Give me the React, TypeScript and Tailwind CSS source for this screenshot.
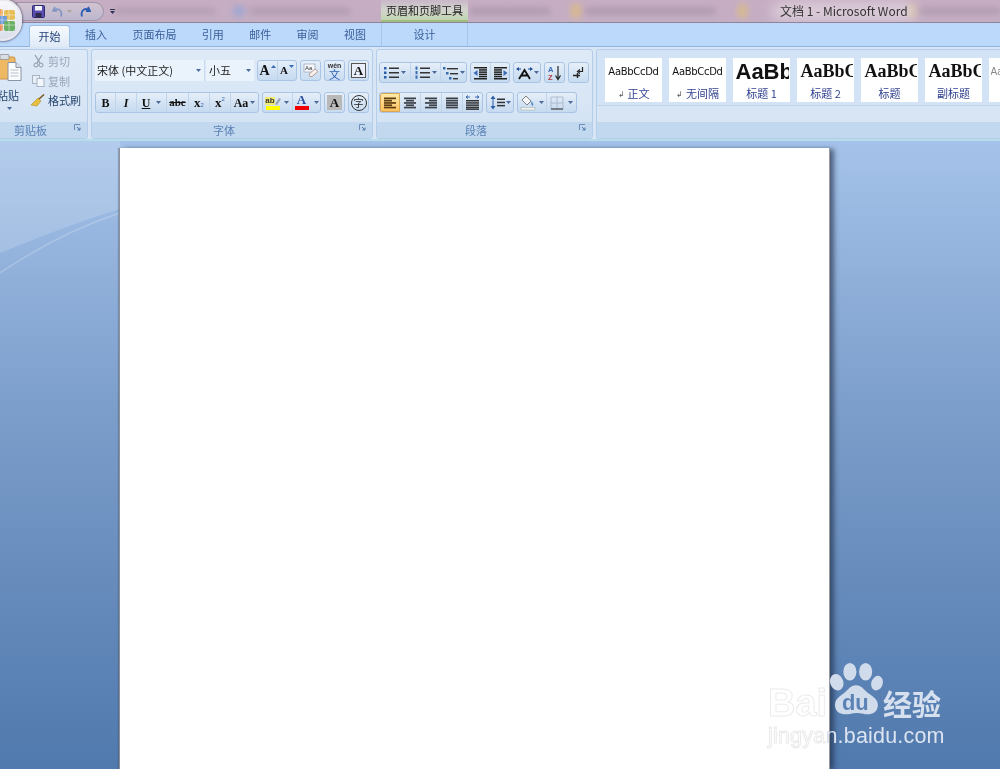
import React from "react";

const cjk = "font-['Noto_Sans_CJK_SC','Noto_Sans',sans-serif]";

function Arrow({ c = "#4a6a9a" }: { c?: string }) {
  return (
    <svg width="5" height="3" viewBox="0 0 5 3" className="shrink-0">
      <path d="M0 0h5L2.5 3z" fill={c} />
    </svg>
  );
}

function Grp({ w, children, className = "" }: { w: number; children: React.ReactNode; className?: string }) {
  return (
    <div
      style={{ width: w }}
      className={`h-[21px] flex items-center rounded-[3px] border border-[#a9c5e6] bg-gradient-to-b from-[#e6eff9] via-[#d4e3f4] to-[#c6daf0] overflow-hidden shrink-0 ${className}`}
    >
      {children}
    </div>
  );
}

function Cell({ w, children, className = "", sep = true }: { w: number; children?: React.ReactNode; className?: string; sep?: boolean }) {
  return (
    <div
      style={{ width: w }}
      className={`h-full flex items-center justify-center gap-[2px] shrink-0 ${sep ? "border-r border-[#c0d4ea]" : ""} ${className}`}
    >
      {children}
    </div>
  );
}

function Lines({ kind }: { kind: "left" | "center" | "right" | "just" }) {
  const rows = [0, 1, 2, 3, 4];
  const pos = (i: number) => {
    const short = i % 2 === 1;
    if (kind === "just") return [1, 13];
    if (kind === "left") return short ? [1, 9] : [1, 13];
    if (kind === "right") return short ? [5, 13] : [1, 13];
    return short ? [3, 11] : [1, 13];
  };
  const dark = kind === "left" ? "#5c3d10" : "#3c4048";
  return (
    <svg width="14" height="12" viewBox="0 0 14 12">
      {rows.map((i) => {
        const [a, b] = pos(i);
        return <rect key={i} x={a} y={0.5 + i * 2.3} width={b - a} height="1.7" fill={dark} />;
      })}
    </svg>
  );
}

function BulletIcon() {
  return (
    <svg width="15" height="13" viewBox="0 0 15 13">
      {[1, 5.5, 10].map((y) => (
        <g key={y}>
          <rect x="0" y={y} width="2.5" height="2.5" fill="#2a5ea8" />
          <rect x="5" y={y + 0.5} width="10" height="1.5" fill="#333" />
        </g>
      ))}
    </svg>
  );
}

function NumberIcon() {
  return (
    <svg width="15" height="13" viewBox="0 0 15 13">
      {[1, 5.5, 10].map((y) => (
        <g key={y}>
          <rect x="0.5" y={y - 0.5} width="2" height="3.2" fill="#3a6cb4" />
          <rect x="5" y={y + 0.5} width="10" height="1.5" fill="#333" />
        </g>
      ))}
    </svg>
  );
}

function MultiIcon() {
  return (
    <svg width="16" height="14" viewBox="0 0 16 14">
      <rect x="0" y="1" width="2.5" height="2.5" fill="#3a6cb4" />
      <rect x="4" y="2" width="11" height="1.4" fill="#333" />
      <rect x="3" y="6" width="2.5" height="2.5" fill="#3a6cb4" />
      <rect x="7" y="7" width="8" height="1.4" fill="#333" />
      <rect x="6" y="11" width="2.5" height="2.5" fill="#3a6cb4" />
      <rect x="10" y="12" width="5" height="1.4" fill="#333" />
    </svg>
  );
}

function IndentIcon({ flip }: { flip?: boolean }) {
  return (
    <svg width="15" height="14" viewBox="0 0 15 14" style={flip ? { transform: "scaleX(-1)" } : undefined}>
      {[1, 3.2, 5.4, 7.6, 9.8, 12].map((y, i) => (
        <rect key={y} x={i === 0 || i === 5 ? 1 : 6} y={y} width={i === 0 || i === 5 ? 13 : 8} height="1.5" fill="#222" />
      ))}
      <path d="M0.5 7l4-3v6z" fill="#3a6cb4" />
    </svg>
  );
}

function LetterBtn({ children, className = "" }: { children: React.ReactNode; className?: string }) {
  return (
    <div className={`h-[21px] w-[21px] flex items-center justify-center rounded-[3px] border border-[#a9c5e6] bg-gradient-to-b from-[#e6eff9] to-[#c8dcf1] shrink-0 ${className}`}>
      {children}
    </div>
  );
}

const serifB = "font-['Liberation_Serif',serif] font-bold text-[#111]";

function FontGroup() {
  return (
    <Group w={282} label="字体" labelClass="pl-[121px]">
      <div className="flex flex-col gap-[11px] pl-[3px] pt-[10px]">
        <div className="flex items-center h-[21px]">
          <div className={`w-[110px] h-[21px] bg-[#eaf2fb] border-r border-[#c6d9ee] flex items-center justify-between pl-[2px] pr-[3px] text-[11px] text-[#222] ${cjk}`}>
            <span>宋体 (中文正文)</span>
            <Arrow />
          </div>
          <div className={`ml-[1px] w-[48px] h-[21px] bg-[#eaf2fb] flex items-center justify-between pl-[3px] pr-[3px] text-[11px] text-[#222] ${cjk}`}>
            <span>小五</span>
            <Arrow />
          </div>
          <Grp w={40} className="ml-[3px]">
            <Cell w={20}>
              <span className={`${serifB} text-[14px] leading-none`}>A</span>
              <svg width="5" height="3" viewBox="0 0 5 3" className="-mt-2 -ml-[1px]"><path d="M0 3h5L2.5 0z" fill="#3a6cb4" /></svg>
            </Cell>
            <Cell w={18} sep={false}>
              <span className={`${serifB} text-[11px] leading-none`}>A</span>
              <svg width="5" height="3" viewBox="0 0 5 3" className="-mt-2 -ml-[1px]"><path d="M0 0h5L2.5 3z" fill="#3a6cb4" /></svg>
            </Cell>
          </Grp>
          <LetterBtn className="ml-[3px]">
            <svg width="17" height="15" viewBox="0 0 17 15">
              <rect x="2" y="1" width="11" height="8" fill="#f5f7fa" stroke="#8a94a8" strokeWidth="0.6" />
              <text x="3" y="7" fontSize="6" fontFamily="Liberation Sans" fill="#333">Aa</text>
              <path d="M7 11l6-5 3 2.5-6 5H8z" fill="#f6f0ee" stroke="#a98a80" strokeWidth="0.8" />
            </svg>
          </LetterBtn>
          <LetterBtn className="ml-[3px]">
            <div className="flex flex-col items-center leading-none">
              <span className="font-['Liberation_Sans',sans-serif] font-bold text-[7px] text-[#333]">wén</span>
              <span className={`${cjk} text-[11px] leading-[10px] text-[#2f5fb4]`}>文</span>
            </div>
          </LetterBtn>
          <LetterBtn className="ml-[3px]">
            <div className={`w-[15px] h-[15px] border border-[#555] flex items-center justify-center ${serifB} text-[13px] leading-none bg-[#e8eff8]`}>A</div>
          </LetterBtn>
        </div>
        <div className="flex items-center h-[21px]">
          <Grp w={164}>
            <Cell w={20}><span className={`${serifB} text-[12px]`}>B</span></Cell>
            <Cell w={21}><span className={`${serifB} italic text-[12px]`}>I</span></Cell>
            <Cell w={30} className="!gap-[6px]">
              <span className={`${serifB} underline text-[12px]`}>U</span>
              <Arrow />
            </Cell>
            <Cell w={22}><span className={`${serifB} line-through text-[11px]`}>abc</span></Cell>
            <Cell w={21}>
              <span className={`${serifB} text-[13px]`}>x</span>
              <span className="text-[6px] text-[#3a6cb4] font-['Liberation_Sans',sans-serif] mt-[6px] -ml-[2px]">2</span>
            </Cell>
            <Cell w={21}>
              <span className={`${serifB} text-[13px]`}>x</span>
              <span className="text-[6px] text-[#3a6cb4] font-['Liberation_Sans',sans-serif] -mt-[6px] -ml-[2px]">2</span>
            </Cell>
            <Cell w={27} sep={false}>
              <span className={`${serifB} text-[12px]`}>Aa</span>
              <Arrow />
            </Cell>
          </Grp>
          <Grp w={59} className="ml-[3px]">
            <Cell w={30} className="!gap-[4px]">
              <div className="flex flex-col items-center w-[14px]">
                <div className="flex items-end h-[9px]">
                  <span className="bg-[#f2ea70] text-[8px] leading-[8px] font-['Liberation_Sans',sans-serif] font-bold text-[#333]">ab</span>
                  <svg width="6" height="8" viewBox="0 0 6 8"><path d="M0 7l4-6 2 1-4 6z" fill="#9aa5b5" /></svg>
                </div>
                <div className="w-[14px] h-[4px] bg-[#ffff00] mt-[1px]" />
              </div>
              <Arrow />
            </Cell>
            <Cell w={27} sep={false} className="!gap-[5px]">
              <div className="flex flex-col items-center w-[14px]">
                <span className="font-['Liberation_Serif',serif] font-bold text-[13px] leading-[10px] text-[#2a4f9a]">A</span>
                <div className="w-[14px] h-[4px] bg-[#f00000] mt-[1px]" />
              </div>
              <Arrow />
            </Cell>
          </Grp>
          <LetterBtn className="ml-[3px]">
            <div className={`w-[15px] h-[15px] bg-[#b9b9b9] flex items-center justify-center ${serifB} text-[13px] leading-none`}>A</div>
          </LetterBtn>
          <LetterBtn className="ml-[3px]">
            <div className={`w-[16px] h-[16px] rounded-full border border-[#333] flex items-center justify-center ${cjk} text-[10px] leading-none text-[#222]`}>字</div>
          </LetterBtn>
        </div>
      </div>
    </Group>
  );
}

function Launcher() {
  return (
    <svg width="8" height="8" viewBox="0 0 8 8" className="absolute right-[5px] top-[2px]">
      <path d="M0.5 6V0.5H6" stroke="#6d8db8" fill="none" />
      <path d="M3 3l3 3M6 3.5V6H3.5" stroke="#4f76a8" fill="none" />
    </svg>
  );
}

function Group({ w, label, labelClass = "", children }: { w: number; label: string; labelClass?: string; children: React.ReactNode }) {
  return (
    <div style={{ width: w }} className="h-[90px] shrink-0 rounded-[3px] border border-[#b4cde8] bg-gradient-to-b from-[#dfeaf7] to-[#d2e2f4] flex flex-col overflow-hidden">
      <div className="h-[72px] shrink-0">{children}</div>
      <div className={`relative flex-1 bg-[#c2d8ef] flex items-center text-[11px] text-[#5a80b5] ${cjk} ${labelClass}`}>
        {label}
        <Launcher />
      </div>
    </div>
  );
}

function Clipboard() {
  return (
    <div className="w-[89px] h-[90px] -ml-[1px] shrink-0 rounded-r-[3px] border border-l-0 border-[#b4cde8] bg-gradient-to-b from-[#dfeaf7] to-[#d2e2f4] flex flex-col overflow-hidden">
      <div className="h-[72px] shrink-0 flex">
        <div className="w-[28px] shrink-0 flex flex-col items-start">
          <svg width="24" height="28" viewBox="0 0 24 28" className="mt-[4px]">
            <rect x="-4" y="3" width="20" height="22" rx="2" fill="#efb862" stroke="#c99344" />
            <rect x="1" y="0.5" width="9" height="5" rx="1" fill="#d8dde6" stroke="#888" strokeWidth="0.7" />
            <path d="M9 8.5h8l5 5v13H9z" fill="#fbfcfe" stroke="#8a94a3" />
            <path d="M17 8.5v5h5" fill="#dfe5ee" stroke="#8a94a3" />
            <path d="M11.5 16h8M11.5 19h8M11.5 22h8" stroke="#b8c0cc" />
          </svg>
          <span className={`${cjk} text-[11px] leading-[14px] text-[#27466f] mt-[6px] -ml-[2px]`}>粘贴</span>
          <div className="ml-[8px] mt-[5px]"><Arrow /></div>
        </div>
        <div className={`flex flex-col ${cjk} text-[11px] leading-[14px] pt-[3px]`}>
          <div className="flex items-center h-[14px] mt-[1px] gap-[4px] text-[#9aa7b8] pl-[6px]">
            <svg width="11" height="13" viewBox="0 0 11 13"><path d="M2 0l5 8M9 0L4 8" stroke="#8d97a6" strokeWidth="1.1" fill="none" /><circle cx="3" cy="10" r="2" fill="none" stroke="#8d97a6" /><circle cx="8" cy="10" r="2" fill="none" stroke="#8d97a6" /></svg>
            剪切
          </div>
          <div className="flex items-center h-[14px] mt-[6px] gap-[3px] text-[#9aa7b8] pl-[5px]">
            <svg width="13" height="12" viewBox="0 0 13 12"><rect x="0.5" y="0.5" width="7" height="8" fill="#e8eef6" stroke="#a8b4c4" /><rect x="5" y="3.5" width="7" height="8" fill="#f3f6fa" stroke="#a8b4c4" /></svg>
            复制
          </div>
          <div className="flex items-center h-[14px] mt-[5px] gap-[3px] text-[#27466f] pl-[4px]">
            <svg width="14" height="13" viewBox="0 0 14 13"><path d="M13 0.5L7 6" stroke="#7a5a26" strokeWidth="1.6" /><path d="M7 4l3 3-4 5-6-1z" fill="#e8c040" stroke="#a57f1c" strokeWidth="0.5" /></svg>
            格式刷
          </div>
        </div>
      </div>
      <div className={`relative flex-1 bg-[#c2d8ef] flex items-center pl-[15px] text-[11px] text-[#5a80b5] ${cjk}`}>
        剪贴板
        <Launcher />
      </div>
    </div>
  );
}

function Paragraph() {
  return (
    <Group w={217} label="段落" labelClass="pl-[88px]">
      <div className="flex flex-col gap-[9px] pl-[2px] pt-[12px]">
        <div className="flex items-center">
          <Grp w={88}>
            <Cell w={31}><BulletIcon /><Arrow /></Cell>
            <Cell w={30}><NumberIcon /><Arrow /></Cell>
            <Cell w={25} sep={false} className="!gap-[1px]"><MultiIcon /><Arrow /></Cell>
          </Grp>
          <Grp w={40} className="ml-[3px]">
            <Cell w={20}><IndentIcon /></Cell>
            <Cell w={18} sep={false}><IndentIcon flip /></Cell>
          </Grp>
          <Grp w={28} className="ml-[3px]">
            <Cell w={26} sep={false} className="!gap-[1px]">
              <svg width="17" height="14" viewBox="0 0 17 14">
                <path d="M3 13L8.5 4 14 13M5.5 9.5h6" stroke="#111" strokeWidth="1.8" fill="none" />
                <path d="M0 3l3-2v1.5h2v1H3V5zM17 3l-3-2v1.5h-2v1h2V5z" fill="#1f4e9c" />
              </svg>
              <Arrow />
            </Cell>
          </Grp>
          <LetterBtn className="ml-[3px]">
            <svg width="15" height="16" viewBox="0 0 15 16">
              <text x="1" y="7" fontSize="7.5" fontWeight="bold" fontFamily="Liberation Sans" fill="#3a6cb4">A</text>
              <text x="1" y="15" fontSize="7.5" fontWeight="bold" fontFamily="Liberation Sans" fill="#b03a3a">Z</text>
              <path d="M11 1v12M8.5 10.5L11 14.5l2.5-4" stroke="#222" strokeWidth="1.2" fill="none" />
            </svg>
          </LetterBtn>
          <LetterBtn className="ml-[3px]">
            <svg width="13" height="13" viewBox="0 0 13 13">
              <path d="M10.5 1v4.5H6.5M8 3.5L5.5 5.5 8 7.5" stroke="#222" strokeWidth="1.2" fill="none" />
              <path d="M1 9.5h7M5.5 7v5" stroke="#222" strokeWidth="1.4" />
            </svg>
          </LetterBtn>
        </div>
        <div className="flex items-center">
          <Grp w={104}>
            <Cell w={20} className="bg-gradient-to-b from-[#fde9a8] to-[#fbc060] border border-[#d9a650] rounded-l-[2px]"><Lines kind="left" /></Cell>
            <Cell w={21}><Lines kind="center" /></Cell>
            <Cell w={21}><Lines kind="right" /></Cell>
            <Cell w={21}><Lines kind="just" /></Cell>
            <Cell w={19} sep={false}>
              <svg width="15" height="15" viewBox="0 0 15 15">
                <path d="M1 2h4M10 2h4M1 2l2-1.500M1 2l2 1.500M14 2l-2-1.500M14 2l-2 1.500" stroke="#2a5ea8" strokeWidth="0.9" fill="none" />
                {[5, 7.2, 9.4, 11.6, 13.4].map((y) => <rect key={y} x="1" y={y} width="13" height="1.5" fill="#333" />)}
              </svg>
            </Cell>
          </Grp>
          <Grp w={28} className="ml-[3px]">
            <Cell w={26} sep={false} className="!gap-[1px]">
              <svg width="15" height="15" viewBox="0 0 15 15">
                <path d="M3 0.500L0.500 4h5zM3 14.500L0.500 11h5z" fill="#2a5ea8" />
                <rect x="2.500" y="4" width="1" height="7" fill="#2a5ea8" />
                {[3.5, 6.7, 9.9].map((y) => <rect key={y} x="7" y={y} width="8" height="1.5" fill="#333" />)}
              </svg>
              <Arrow />
            </Cell>
          </Grp>
          <Grp w={60} className="ml-[3px]">
            <Cell w={29} className="!gap-[3px]">
              <svg width="16" height="16" viewBox="0 0 16 16">
                <path d="M6 1l5 5-4 4-5-5z" fill="#f4f6f9" stroke="#666" strokeWidth="0.8" />
                <path d="M11 6c2 2 3 3 2 4.500s-2-1-2-4.500z" fill="#5a8fcc" />
                <rect x="1" y="12.500" width="14" height="2.500" fill="#f3f3ee" stroke="#9aa" strokeWidth="0.5" />
              </svg>
              <Arrow />
            </Cell>
            <Cell w={29} sep={false} className="!gap-[4px]">
              <svg width="14" height="14" viewBox="0 0 14 14">
                <path d="M1 1h12v12H1zM7 1v12M1 7h12" stroke="#a5b3c6" strokeWidth="0.8" fill="none" />
                <path d="M1 13h12" stroke="#333" strokeWidth="1.2" />
              </svg>
              <Arrow />
            </Cell>
          </Grp>
        </div>
      </div>
    </Group>
  );
}

function Tile({ sample, sampleClass, name, mark }: { sample: string; sampleClass: string; name: string; mark?: boolean }) {
  return (
    <div className="w-[57px] h-[44px] shrink-0 bg-white flex flex-col items-center overflow-hidden">
      <div className={`h-[27px] w-[54px] flex items-center overflow-hidden whitespace-nowrap ${sampleClass}`}>{sample}</div>
      <div className={`h-[17px] flex items-center gap-[3px] text-[11px] leading-none text-[#2e3f8f] whitespace-nowrap ${cjk}`}>
        {mark && <span className="text-[8px] text-[#555]">↲</span>}
        {name}
      </div>
    </div>
  );
}

const sansS = "font-['DejaVu_Sans',sans-serif] text-[10px] text-[#111] tracking-[-0.3px] justify-center";
const serifS = "font-['Liberation_Serif',serif] font-bold text-[18px] text-[#111] pl-[2px]";

function Styles() {
  return (
    <div className="flex-1 h-[90px] rounded-l-[3px] border border-r-0 border-[#b4cde8] bg-gradient-to-b from-[#dfeaf7] to-[#d2e2f4] flex flex-col overflow-hidden">
      <div className="h-[56px] shrink-0 flex gap-[7px] pl-[8px] pt-[8px] border-b border-[#c0d6ed] bg-[#d2e3f6]">
        <Tile sample="AaBbCcDd" sampleClass={sansS} name="正文" mark />
        <Tile sample="AaBbCcDd" sampleClass={sansS} name="无间隔" mark />
        <Tile sample="AaBb" sampleClass="font-['Liberation_Sans',sans-serif] font-bold text-[22px] text-[#111] pl-[1px]" name="标题 1" />
        <Tile sample="AaBbC" sampleClass={serifS} name="标题 2" />
        <Tile sample="AaBbC" sampleClass={serifS} name="标题" />
        <Tile sample="AaBbC" sampleClass={serifS} name="副标题" />
        <Tile sample="Aa" sampleClass="font-['Liberation_Sans',sans-serif] text-[10px] text-[#888]" name="不明显" />
      </div>
      <div className="h-[16px] shrink-0 bg-[#d8e5f4]" />
      <div className="flex-1 bg-[#c2d8ef]" />
    </div>
  );
}

function TitleBar() {
  return (
    <div className="relative h-[23px] shrink-0 bg-gradient-to-b from-[#c7adc3] to-[#c4aec4] border-b border-[#8f8397] overflow-hidden">
      <div className="absolute left-[115px] top-[8px] w-[100px] h-[6px] bg-[#7b6e7e] opacity-25 blur-[3px]" />
      <div className="absolute left-[233px] top-[5px] w-[12px] h-[12px] rounded-full bg-[#8fa3d8] opacity-70 blur-[3px]" />
      <div className="absolute left-[250px] top-[8px] w-[100px] h-[6px] bg-[#7b6e7e] opacity-30 blur-[3px]" />
      <div className="absolute left-[470px] top-[8px] w-[80px] h-[6px] bg-[#7b6e7e] opacity-35 blur-[3px]" />
      <div className="absolute left-[571px] top-[4px] w-[10px] h-[14px] bg-[#e0bf78] opacity-70 blur-[3px]" />
      <div className="absolute left-[585px] top-[8px] w-[130px] h-[6px] bg-[#7b6e7e] opacity-35 blur-[3px]" />
      <div className="absolute left-[738px] top-[4px] w-[9px] h-[14px] bg-[#e0bf78] opacity-70 blur-[3px]" />
      <div className="absolute left-[915px] top-[8px] w-[85px] h-[6px] bg-[#7b6e7e] opacity-30 blur-[3px]" />
      <div className="absolute left-[908px] top-[4px] w-[8px] h-[14px] bg-[#e0bf78] opacity-50 blur-[3px]" />
      <div className="absolute left-[772px] top-[2px] w-[145px] h-[19px] rounded-full bg-[#e8dfe6] opacity-60 blur-[6px]" />
      <div className={`absolute left-[780px] top-[2px] text-[12px] leading-[18px] text-[#333] ${cjk}`}>文档 1 - Microsoft Word</div>
      <div className="absolute left-[381px] top-0 w-[87px] h-[22px] bg-gradient-to-b from-[#c9b7c7] via-[#d2d4ce] to-[#c0d4ae] border-b-2 border-[#9fbf7e] flex items-center justify-center">
        <span className={`text-[11px] leading-none text-[#222] mt-[1px] ${cjk}`}>页眉和页脚工具</span>
      </div>
      <div className="absolute left-[16px] top-[2px] w-[88px] h-[19px] rounded-r-full border border-[#9f93a8] bg-gradient-to-b from-[#d2c4d0] to-[#bcb6ce] flex items-center pl-[15px]">
        <svg width="13" height="13" viewBox="0 0 13 13">
          <rect x="0.5" y="0.5" width="12" height="12" rx="1" fill="#5a4fb0" stroke="#2e2a70" />
          <rect x="3" y="1" width="7" height="4.500" fill="#f3f3fa" />
          <rect x="3.500" y="8" width="6" height="4.500" fill="#2c2c4a" />
        </svg>
        <svg width="13" height="12" viewBox="0 0 13 12" className="ml-[7px] opacity-50">
          <path d="M3 1L1 5h4M2 4.500c3-3 9-1 7 6" stroke="#3f6db8" strokeWidth="1.7" fill="none" />
        </svg>
        <div className="ml-[2px]"><Arrow c="#a7a89a" /></div>
        <svg width="13" height="12" viewBox="0 0 13 12" className="ml-[6px]">
          <path d="M10 1l2 4H8M11 4.500c-3-3-9-1-7 6" stroke="#2a5cb0" strokeWidth="1.8" fill="none" />
        </svg>
      </div>
      <div className="absolute left-[110px] top-[9px] flex flex-col items-center gap-[1px]">
        <div className="w-[5px] h-[1px] bg-[#335]" />
        <Arrow c="#335" />
      </div>
    </div>
  );
}

function TabBar() {
  const tabs = ["插入", "页面布局", "引用", "邮件", "审阅", "视图"];
  return (
    <div className={`relative h-[24px] shrink-0 bg-[#bcd9fc] border-b border-[#8fb6e2] flex items-end pl-[29px] text-[11px] text-[#3a5f98] ${cjk}`}>
      <div className="w-[41px] h-[22px] -mb-[1px] rounded-t-[3px] border border-b-0 border-[#9cc0e8] bg-gradient-to-b from-[#f6fafe] to-[#dfeaf7] flex items-center justify-center text-[#25457a]">开始</div>
      <div className="flex items-center h-full ml-[15px] gap-[25.4px]">
        {tabs.map((t) => (
          <span key={t} className="leading-none">{t}</span>
        ))}
      </div>
      <div className="ml-[15px] w-[87px] h-full border-x border-[#a4c4ea] flex items-center justify-center">设计</div>
    </div>
  );
}

function Watermark() {
  return (
    <div className="absolute left-[768px] top-[662px] w-[190px] h-[95px] pointer-events-none">
      <svg width="54" height="56" viewBox="0 0 60 64" className="absolute left-[61px] top-[1px]">
        <g fill="#d0dcec">
          <ellipse cx="8" cy="22" rx="7.500" ry="9.500" transform="rotate(-18 8 22)" />
          <ellipse cx="23" cy="10" rx="7.500" ry="10" />
          <ellipse cx="41" cy="10" rx="7.500" ry="10" />
          <ellipse cx="54" cy="23" rx="6.500" ry="8.500" transform="rotate(18 54 23)" />
          <path d="M6 48c0-9 9-11 15-18 5-6 13-6 18 0 6 7 16 9 16 18 0 10-10 12-17 10-5-1-9-1-14 0-8 2-18 0-18-10z" />
        </g>
        <text x="14" y="54" fontSize="25" fontWeight="bold" fontFamily="Liberation Sans" fill="#5b82b5">du</text>
      </svg>
      <div className="absolute left-0 top-[22px] font-['Liberation_Sans',sans-serif] font-bold text-[38px] leading-[38px] text-white [-webkit-text-stroke:1px_#ececec]">Bai</div>
      <div className={`absolute left-[115px] top-[24px] font-bold text-[29px] leading-[34px] text-[#d6e0ee] ${cjk}`}>经验</div>
      <div className="absolute left-0 top-[60px] font-['Liberation_Sans',sans-serif] text-[21.5px] leading-[28px] whitespace-nowrap tracking-[0.2px]">
        <span className="text-white [-webkit-text-stroke:1px_#eaeaea]">jingya</span>
        <span className="text-[#dbe4f0]">n.baidu.com</span>
      </div>
    </div>
  );
}

export default function App() {
  return (
    <div className="relative w-[1000px] h-[769px] overflow-hidden flex flex-col blur-[0.35px] bg-white">
      <TitleBar />
      <TabBar />
      <div className="h-[94px] shrink-0 bg-[#d7e5f5] flex gap-[3px] pt-[2px] border-b-2 border-[#b7dcea]">
        <Clipboard />
        <FontGroup />
        <Paragraph />
        <Styles />
      </div>
      <div className="relative flex-1 bg-gradient-to-b from-[#a5c3ea] via-[#7a9cc9] via-[45%] to-[#5079ad] pl-[120px] pt-[7px] overflow-hidden">
        <svg width="120" height="200" viewBox="0 0 120 200" className="absolute left-0 top-0">
          <path d="M0 112C40 96 80 80 120 68V0H0z" fill="#ffffff" opacity="0.16" />
          <path d="M0 132C40 105 80 85 120 72" stroke="#ffffff" strokeOpacity="0.22" fill="none" strokeWidth="1.500" />
        </svg>
        <div className="relative w-[709px] h-full bg-white shadow-[1px_0_0_#9a9a9a,-1px_0_0_#8d9199,-2px_0_1px_rgba(70,80,100,0.35),5px_1px_5px_rgba(30,45,70,0.65)]" />
      </div>
      <Watermark />
      <div className="absolute left-[-17px] top-[-1px] w-[39px] h-[42px] rounded-full border-2 border-[#e8e8ee] bg-gradient-to-b from-[#f8f8fb] to-[#d9deea] flex items-center justify-center shadow-[0_0_2px_1px_rgba(70,70,90,0.6)]">
        <svg width="26" height="26" viewBox="0 0 26 26" className="opacity-85">
          <rect x="1" y="2" width="12" height="11" rx="2" fill="#ee9a3e" />
          <rect x="14" y="3" width="11" height="10" rx="2" fill="#e6b63a" />
          <rect x="1" y="14" width="12" height="10" rx="2" fill="#e8803a" />
          <rect x="8" y="9" width="9" height="8" rx="1" fill="#5a8fd4" />
          <rect x="14" y="14" width="11" height="10" rx="2" fill="#55a84e" />
          <path d="M6 0v26M12 0v26M19 0v26M0 8h26M0 13h26M0 18h26" stroke="#fff" strokeOpacity="0.55" strokeWidth="0.8" />
        </svg>
      </div>
    </div>
  );
}
